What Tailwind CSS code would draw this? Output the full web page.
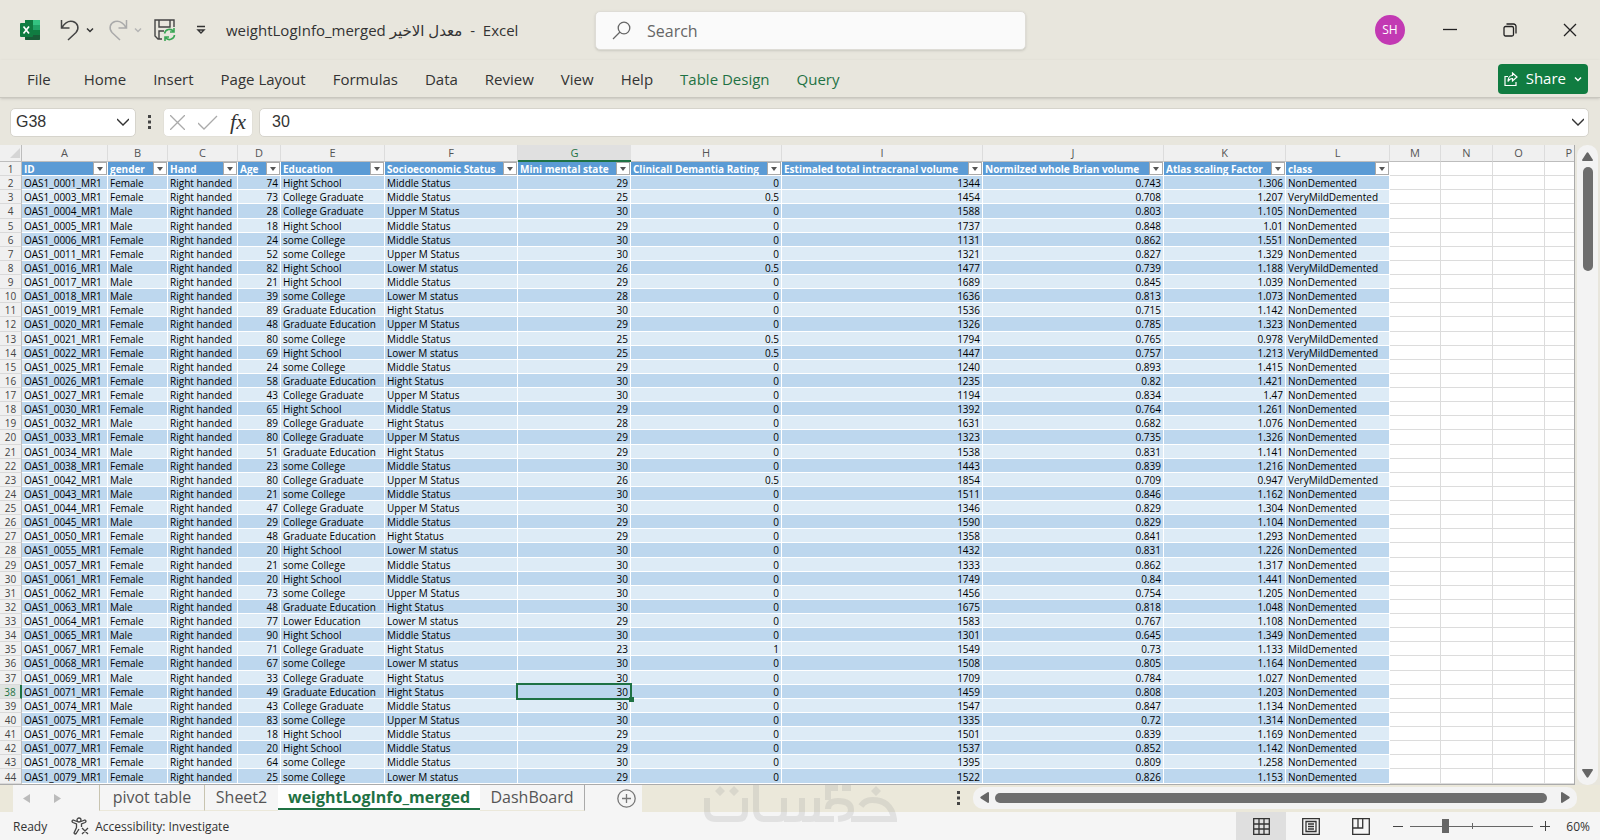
<!DOCTYPE html>
<html lang="en">
<head>
  <meta charset="UTF-8" />
  <meta name="viewport" content="width=device-width, initial-scale=1.0" />
  <title>weightLogInfo_merged - Excel</title>
  <script src="https://cdn.jsdelivr.net/npm/@tailwindcss/browser@4"></script>
</head>
<body class="h-screen flex flex-col overflow-hidden bg-[#e8e6dd] text-[#333] font-['Open_Sans','DejaVu_Sans',sans-serif]">

  <!-- TITLE BAR -->
  <header class="relative flex items-center h-[60px] shrink-0 pl-5 pr-[23px]">
    <svg class="w-5 h-5" viewBox="0 0 20 20">
      <rect x="5" y="0" width="15" height="20" rx="1" fill="#21a366" />
      <path d="M5 0h8v5H5z" fill="#107c41" />
      <path d="M13 0h6a1 1 0 0 1 1 1v4h-7z" fill="#33c481" />
      <path d="M5 10h8v5H5z" fill="#185c37" />
      <path d="M13 10h7v5h-7z" fill="#107c41" />
      <path d="M5 15h15v4a1 1 0 0 1-1 1H6a1 1 0 0 1-1-1z" fill="#185c37" />
      <rect x="0" y="3" width="13" height="14" rx="1" fill="#107c41" />
      <path d="M3.500 6.500l5.500 7M9 6.500l-5.500 7" stroke="#fff" stroke-width="1.700" />
    </svg>
    <button aria-label="Undo" class="ml-5">
      <svg class="w-5 h-[22px]" viewBox="0 0 20 22" fill="none" stroke="#444" stroke-width="1.500"><path d="M1.500 1v8h8M2 8.500C5 3.500 9 1.500 13 2.500c5 1.500 6.500 7 3 11L8 21" /></svg>
    </button>
    <button aria-label="Undo list" class="ml-1.5">
      <svg class="w-2 h-2" viewBox="0 0 8 8" fill="none" stroke="#333" stroke-width="1.500"><path d="M1 2.500l3 3 3-3" /></svg>
    </button>
    <button aria-label="Redo" class="ml-3.5">
      <svg class="w-5 h-[22px]" viewBox="0 0 20 22" fill="none" stroke="#aaa" stroke-width="1.500"><path d="M18.500 1v8h-8M18 8.500C15 3.500 11 1.500 7 2.500c-5 1.500-6.500 7-3 11L12 21" /></svg>
    </button>
    <button aria-label="Redo list" class="ml-1.5">
      <svg class="w-2 h-2" viewBox="0 0 8 8" fill="none" stroke="#b5b5b5" stroke-width="1.500"><path d="M1 2.500l3 3 3-3" /></svg>
    </button>
    <button aria-label="Save" class="ml-3">
      <svg class="w-[22px] h-[22px]" viewBox="0 0 22 22" fill="none" stroke="#444" stroke-width="1.400">
        <path d="M8 20H4l-3-3V1h19v7M5 1v7h11V1M5 20v-8h5" />
        <path d="M10.500 14.500a5 5 0 0 1 9-2M20 9v4h-4M20.500 16a5 5 0 0 1-9 2.500M11 22v-4h4" stroke="#3aa655" stroke-width="1.600" />
      </svg>
    </button>
    <button aria-label="Customize toolbar" class="ml-5">
      <svg class="w-2.5 h-2.5" viewBox="0 0 10 10" fill="none" stroke="#333" stroke-width="1.400"><path d="M1 1.500h8M2 5l3 3 3-3z" /></svg>
    </button>
    <h1 class="ml-5 text-[15px] leading-5 whitespace-pre">weightLogInfo_merged معدل الاخير  -  Excel</h1>

    <label class="absolute left-[595px] top-[11px] w-[431px] h-[39px] flex items-center gap-4 pl-4 rounded-[5px] bg-[#fafafa] border border-[#dedcd6] shadow">
      <svg class="w-[19px] h-[19px]" viewBox="0 0 19 19" fill="none" stroke="#666" stroke-width="1.300"><circle cx="12" cy="7" r="5.800" /><path d="M8 11L1 18" /></svg>
      <input type="text" aria-label="Search" placeholder="Search" class="flex-1 text-base outline-none placeholder:text-[#666]" />
    </label>

    <div class="ml-auto flex items-center">
      <button class="w-[30px] h-[30px] rounded-full bg-[#c239b3] text-white text-xs">SH</button>
      <button aria-label="Minimize" class="ml-[38px]"><svg class="w-3.5 h-3.5" viewBox="0 0 14 14" stroke="#222" stroke-width="1.300"><path d="M0 6.500h14" /></svg></button>
      <button aria-label="Restore" class="ml-[46px]"><svg class="w-3.5 h-3.5" viewBox="0 0 14 14" fill="none" stroke="#222" stroke-width="1.300"><rect x="1" y="3.500" width="9.500" height="9.500" rx="1.500" /><path d="M3.500 1h7A2.500 2.500 0 0 1 13 3.500v7" /></svg></button>
      <button aria-label="Close" class="ml-[46px]"><svg class="w-3.5 h-3.5" viewBox="0 0 14 14" stroke="#222" stroke-width="1.300"><path d="M1 1l12 12M13 1L1 13" /></svg></button>
    </div>
  </header>

  <!-- RIBBON TABS -->
  <nav class="flex items-center h-[38px] shrink-0 pl-[27px] pr-3 pt-0.5 gap-[27px] text-[15px] whitespace-nowrap border-b border-[#c9c7bf] shadow-sm">
    <button class="mr-1.5">File</button>
    <button>Home</button>
    <button>Insert</button>
    <button>Page Layout</button>
    <button>Formulas</button>
    <button>Data</button>
    <button>Review</button>
    <button>View</button>
    <button>Help</button>
    <button class="text-[#1f7244]">Table Design</button>
    <button class="text-[#1f7244]">Query</button>
    <button class="ml-auto flex items-center h-[30px] px-1.5 mb-0.5 gap-2 rounded bg-[#107c41] text-white">
      <svg class="w-3.5 h-3.5" viewBox="0 0 14 14" fill="none" stroke="#fff" stroke-width="1.200"><path d="M4 4.500H1v9h11V10M8.500 1l4.500 4-4.500 4V6.500C6 6.500 5 7.500 4 9.500c0-3 1.500-6 4.500-6z" /></svg>
      Share
      <svg class="w-2 h-2" viewBox="0 0 8 8" fill="none" stroke="#fff" stroke-width="1.500"><path d="M1 2.500l3 3 3-3" /></svg>
    </button>
  </nav>

  <!-- FORMULA BAR -->
  <div class="flex items-center h-[47px] shrink-0 pl-2.5 pr-[11px] pt-px text-base text-[#333] font-['Liberation_Sans',sans-serif]">
    <div class="flex items-center w-[126px] h-[29px] rounded-[5px] bg-white border border-[#d6d4cc] pl-[5px] pr-1.5">
      <input type="text" aria-label="Name box" value="G38" class="w-full min-w-0 outline-none" />
      <button aria-label="Names"><svg class="w-3 h-3" viewBox="0 0 12 12" fill="none" stroke="#333" stroke-width="1.400"><path d="M0 3l6 6 6-6" /></svg></button>
    </div>
    <svg class="w-[3px] h-3.5 mx-3" viewBox="0 0 3 14" fill="#444"><path d="M0 0h3v3H0zM0 5.500h3v3H0zM0 11h3v3H0z" /></svg>
    <div class="flex items-center justify-between w-[90px] h-[29px] rounded-[5px] bg-white border border-[#e2e0d8] pl-1.5 pr-1.5">
      <button aria-label="Cancel"><svg class="w-[15px] h-[15px]" viewBox="0 0 15 15" stroke="#aaa" stroke-width="1.300"><path d="M0 0l15 15M15 0L0 15" /></svg></button>
      <button aria-label="Enter"><svg class="w-5 h-[15px]" viewBox="0 0 20 15" fill="none" stroke="#aaa" stroke-width="1.300"><path d="M0 8l6 6L19 1" /></svg></button>
      <button aria-label="Insert function" class="text-[22px] leading-6 italic font-['Liberation_Serif',serif]">fx</button>
    </div>
    <div class="flex items-center flex-1 h-[29px] ml-1.5 rounded-[5px] bg-white border border-[#d6d4cc] pl-3 pr-1">
      <input type="text" aria-label="Formula" value="30" class="flex-1 outline-none" />
      <button aria-label="Expand formula bar"><svg class="w-3 h-3" viewBox="0 0 12 12" fill="none" stroke="#333" stroke-width="1.400"><path d="M0 3l6 6 6-6" /></svg></button>
    </div>
  </div>

  <!-- SHEET -->
  <main class="flex flex-1 min-h-0">
    <div class="flex-1 h-full overflow-hidden bg-white border-r border-b border-[#ababab]">
      <table class="table-fixed w-full h-full border-separate border-spacing-0 text-[10px] leading-[12px] text-black">
        <colgroup>
          <col class="w-[22px]" />
          <col class="w-[86px]" />
          <col class="w-[60px]" />
          <col class="w-[70px]" />
          <col class="w-[43px]" />
          <col class="w-[104px]" />
          <col class="w-[133px]" />
          <col class="w-[113px]" />
          <col class="w-[151px]" />
          <col class="w-[201px]" />
          <col class="w-[181px]" />
          <col class="w-[122px]" />
          <col class="w-[104px]" />
          <col class="w-[51px]" />
          <col class="w-[52px]" />
          <col class="w-[52px]" />
          <col />
        </colgroup>
        <thead>
          <tr id="letters" class="h-[17px] text-[11px] text-[#555]"></tr>
        </thead>
        <tbody id="cells"></tbody>
      </table>
    </div>
    <!-- vertical scroll bar -->
    <div class="flex flex-col items-center w-[21px] mx-0.5 py-[7px] rounded-[10px] bg-[#f3f3f3]">
      <svg class="w-[11px] h-[9px]" viewBox="0 0 11 9" fill="#666"><path d="M4.500 1q1-1.500 2 0L11 8q0 1-1 1H1Q0 9 0 8z" /></svg>
      <div class="w-2.5 h-[104px] mt-1.5 rounded-full bg-[#6e6e6e]"></div>
      <svg class="w-[11px] h-[9px] mt-auto" viewBox="0 0 11 9" fill="#666"><path d="M4.500 8q1 1.500 2 0L11 1q0-1-1-1H1Q0 0 0 1z" /></svg>
    </div>
  </main>

  <!-- SHEET TABS -->
  <div class="relative flex h-[27px] shrink-0 bg-[#ebe8da] pl-[13px] text-base text-[#555]">
    <div class="flex w-[629px] bg-[#f5f5f5]">
      <div class="flex items-center gap-6 w-[86px] pl-2.5">
        <svg class="w-[7px] h-[9px]" viewBox="0 0 7 9" fill="#bbb"><path d="M7 0v9L0 4.500z" /></svg>
        <svg class="w-[7px] h-[9px]" viewBox="0 0 7 9" fill="#bbb"><path d="M0 0v9l7-4.500z" /></svg>
      </div>
      <button class="w-[106px] h-[26px] pb-0.5 border-x border-b border-[#c8c4b0] border-b-[#ebe8da]">pivot table</button>
      <button class="w-[73px] h-[26px] pb-0.5 border-b border-[#ebe8da]">Sheet2</button>
      <button class="w-[202px] h-[25px] bg-white border-b-2 border-[#1f7244] text-[#1f7244] font-bold">weightLogInfo_merged</button>
      <button class="w-[105px] h-[26px] pb-0.5 border-r border-b border-r-[#aaa] border-b-[#ebe8da]">DashBoard</button>
      <button aria-label="New sheet" class="ml-8">
        <svg class="w-[19px] h-[19px]" viewBox="0 0 19 19" fill="none" stroke="#777" stroke-width="1.300"><circle cx="9.500" cy="9.500" r="8.700" /><path d="M9.500 5v9M5 9.500h9" /></svg>
      </button>
    </div>
    <div class="flex items-center ml-auto mr-[23px] mb-0.5">
      <svg class="w-[3px] h-3.5 mr-[13px]" viewBox="0 0 3 14" fill="#444"><path d="M0 0h3v3H0zM0 5.500h3v3H0zM0 11h3v3H0z" /></svg>
      <div class="flex items-center w-[604px] h-[22px] rounded-[10px] bg-[#f3f3f3] px-[7px]">
        <svg class="w-[9px] h-[11px]" viewBox="0 0 9 11" fill="#666"><path d="M1 4.500q-1.500 1 0 2L8 11q1 0 1-1V1q0-1-1-1z" /></svg>
        <div class="flex-1 h-2.5 ml-1.5 mr-3.5 rounded-full bg-[#6e6e6e]"></div>
        <svg class="w-[9px] h-[11px]" viewBox="0 0 9 11" fill="#666"><path d="M8 4.500q1.500 1 0 2L1 11q-1 0-1-1V1q0-1 1-1z" /></svg>
      </div>
    </div>

    <!-- logo mark over the two bottom bars -->
    <svg class="absolute left-[703px] top-0 w-[194px] h-[38px] z-10" viewBox="0 0 194 38" fill="none" stroke="#999" stroke-opacity="0.220" stroke-width="6">
      <path d="M4 13v12q0 9 9 9h22q7 0 7-7V13M53 0v24q0 10 9 10h13q6 0 6-7V13M81 34h12q6 0 6-7V13M99 34h9q6 0 6-7V13M112 34h19" />
      <path d="M148 3h-9M135 3h-10v12M125 24q0-8 10-8 13 0 13 9 0 8-13 9M148 34h43q-3-19-22-19-7 0-11 6" />
      <path d="M12 6l5-5 5 5-5 5zM26 6l5-5 5 5-5 5zM168 6l5-5 5 5-5 5z" fill="#999" fill-opacity="0.220" stroke="none" />
    </svg>
  </div>

  <!-- STATUS BAR -->
  <footer class="flex items-center h-7 shrink-0 bg-[#f5f5f5] pl-[13px] pr-2.5 text-xs text-[#333]">
    <span class="pt-0.5">Ready</span>
    <button class="flex items-center gap-1.5 ml-6">
      <svg class="w-[18px] h-[18px]" viewBox="0 0 18 18" fill="none" stroke="#444" stroke-width="1.300">
        <circle cx="8" cy="3" r="2" />
        <path d="M6 4.500L2 3Q0 4 2 5.500L5.500 7v3.500L3 16q1 2 2.500 0L8 12M10 4.500L14 3q2 1 0 2.500L10.500 7v3M11 11l6 6M17 11l-6 6" />
      </svg>
      <span class="pt-0.5">Accessibility: Investigate</span>
    </button>
    <div class="flex items-center ml-auto h-full">
      <button aria-label="Normal view" class="flex items-center justify-center w-[50px] h-full bg-[#dfdfdf]">
        <svg class="w-[17px] h-[17px]" viewBox="0 0 17 17" fill="none" stroke="#333" stroke-width="1.300"><path d="M.7.7h15.600v15.600H.7zM.7 6h15.600M.7 11h15.600M6 .7v15.600M11 .7v15.600" /></svg>
      </button>
      <button aria-label="Page layout view" class="flex items-center justify-center w-[50px] h-full">
        <svg class="w-[18px] h-[17px]" viewBox="0 0 18 17" fill="none" stroke="#333" stroke-width="1.300"><path d="M.7.7h16.600v15.600H.7zM4 3.500h10v10H4zM6 6h6M6 8.500h6M6 11h6" /></svg>
      </button>
      <button aria-label="Page break view" class="flex items-center justify-center w-[50px] h-full">
        <svg class="w-[18px] h-[17px]" viewBox="0 0 18 17" fill="none" stroke="#333" stroke-width="1.300"><path d="M.7.7h16.600v15.600H.7zM.7 10h10V.7M6 .7V10" /></svg>
      </button>
      <button aria-label="Zoom out" class="ml-[7px]"><svg class="w-2.5 h-2.5" viewBox="0 0 10 10" stroke="#444"><path d="M0 5.500h10" /></svg></button>
      <label class="relative flex items-center w-[123px] h-4 mx-[7px]">
        <span class="absolute left-0 right-0 h-px bg-[#666]"></span>
        <span class="absolute left-1/2 w-px h-1.5 bg-[#666]"></span>
        <input type="range" aria-label="Zoom" min="0" max="100" value="27" class="relative w-full h-4 appearance-none bg-transparent [&::-webkit-slider-thumb]:appearance-none [&::-webkit-slider-thumb]:w-[7px] [&::-webkit-slider-thumb]:h-3.5 [&::-webkit-slider-thumb]:bg-[#666]" />
      </label>
      <button aria-label="Zoom in"><svg class="w-2.5 h-2.5" viewBox="0 0 10 10" stroke="#444"><path d="M0 5.500h10M5.500 0v10" /></svg></button>
      <button class="ml-4 pt-0.5">60%</button>
    </div>
  </footer>

  <script>
    const letters = 'ABCDEFGHIJKLMNOP'.split('');
    const headers = ['ID', 'gender', 'Hand', 'Age', 'Education', 'Socioeconomic Status', 'Mini mental state', 'Clinicall Demantia Rating', 'Estimaled total intracranal volume', 'Normilzed whole Brian volume', 'Atlas scaling Factor', 'class'];

    // id | gender | age | education | status | mini mental | rating | total volume | brain volume | scaling | class
    const data = `0001|Female|74|Hight School|Middle Status|29|0|1344|0.743|1.306|NonDemented
0003|Female|73|College Graduate|Middle Status|25|0.5|1454|0.708|1.207|VeryMildDemented
0004|Male|28|College Graduate|Upper M Status|30|0|1588|0.803|1.105|NonDemented
0005|Male|18|Hight School|Middle Status|29|0|1737|0.848|1.01|NonDemented
0006|Female|24|some College|Middle Status|30|0|1131|0.862|1.551|NonDemented
0011|Female|52|some College|Upper M Status|30|0|1321|0.827|1.329|NonDemented
0016|Male|82|Hight School|Lower M status|26|0.5|1477|0.739|1.188|VeryMildDemented
0017|Male|21|Hight School|Middle Status|29|0|1689|0.845|1.039|NonDemented
0018|Male|39|some College|Lower M status|28|0|1636|0.813|1.073|NonDemented
0019|Female|89|Graduate Education|Hight Status|30|0|1536|0.715|1.142|NonDemented
0020|Female|48|Graduate Education|Upper M Status|29|0|1326|0.785|1.323|NonDemented
0021|Female|80|some College|Middle Status|25|0.5|1794|0.765|0.978|VeryMildDemented
0022|Female|69|Hight School|Lower M status|25|0.5|1447|0.757|1.213|VeryMildDemented
0025|Female|24|some College|Middle Status|29|0|1240|0.893|1.415|NonDemented
0026|Female|58|Graduate Education|Hight Status|30|0|1235|0.82|1.421|NonDemented
0027|Female|43|College Graduate|Upper M Status|30|0|1194|0.834|1.47|NonDemented
0030|Female|65|Hight School|Middle Status|29|0|1392|0.764|1.261|NonDemented
0032|Male|89|College Graduate|Hight Status|28|0|1631|0.682|1.076|NonDemented
0033|Female|80|College Graduate|Upper M Status|29|0|1323|0.735|1.326|NonDemented
0034|Male|51|Graduate Education|Hight Status|29|0|1538|0.831|1.141|NonDemented
0038|Female|23|some College|Middle Status|30|0|1443|0.839|1.216|NonDemented
0042|Male|80|College Graduate|Upper M Status|26|0.5|1854|0.709|0.947|VeryMildDemented
0043|Male|21|some College|Middle Status|30|0|1511|0.846|1.162|NonDemented
0044|Female|47|College Graduate|Upper M Status|30|0|1346|0.829|1.304|NonDemented
0045|Male|29|College Graduate|Middle Status|29|0|1590|0.829|1.104|NonDemented
0050|Female|48|Graduate Education|Hight Status|29|0|1358|0.841|1.293|NonDemented
0055|Female|20|Hight School|Lower M status|30|0|1432|0.831|1.226|NonDemented
0057|Female|21|some College|Middle Status|30|0|1333|0.862|1.317|NonDemented
0061|Female|20|Hight School|Middle Status|30|0|1749|0.84|1.441|NonDemented
0062|Female|73|some College|Upper M Status|30|0|1456|0.754|1.205|NonDemented
0063|Male|48|Graduate Education|Hight Status|30|0|1675|0.818|1.048|NonDemented
0064|Female|77|Lower Education|Lower M status|29|0|1583|0.767|1.108|NonDemented
0065|Male|90|Hight School|Middle Status|30|0|1301|0.645|1.349|NonDemented
0067|Female|71|College Graduate|Hight Status|23|1|1549|0.73|1.133|MildDemented
0068|Female|67|some College|Lower M status|30|0|1508|0.805|1.164|NonDemented
0069|Male|33|College Graduate|Hight Status|30|0|1709|0.784|1.027|NonDemented
0071|Female|49|Graduate Education|Hight Status|30|0|1459|0.808|1.203|NonDemented
0074|Male|43|College Graduate|Middle Status|30|0|1547|0.847|1.134|NonDemented
0075|Female|83|some College|Upper M Status|30|0|1335|0.72|1.314|NonDemented
0076|Female|18|Hight School|Middle Status|29|0|1501|0.839|1.169|NonDemented
0077|Female|20|Hight School|Middle Status|29|0|1537|0.852|1.142|NonDemented
0078|Female|64|some College|Middle Status|30|0|1395|0.809|1.258|NonDemented
0079|Female|25|some College|Lower M status|29|0|1522|0.826|1.153|NonDemented`;

    const emptyCells = '<td class="border-r border-b border-[#dcdcdc]"></td>'.repeat(3) + '<td class="border-b border-[#dcdcdc]"></td>';

    // row numbers; 38 is the selected row
    function rowHead(n) {
      const tone = n === 38
        ? 'bg-[#dfe3e0] text-[#1f7244] border-r-2 border-r-[#1f7244]'
        : 'bg-[#f0f0f0] text-[#444] border-r border-r-[#bdbdbd]';
      return `<th scope="row" class="p-0 pt-px text-center font-normal border-b border-b-[#d9d9d9] ${tone}">${n}</th>`;
    }

    // column letters
    document.getElementById('letters').innerHTML =
      '<td class="p-0 bg-[#f0f0f0] border-r border-b border-[#bdbdbd]"><svg class="w-2.5 h-2.5 ml-2.5" viewBox="0 0 10 10" fill="#d5d5d5"><path d="M10 0v10H0z"/></svg></td>' +
      letters.map(l => {
        if (l === 'G') return '<th scope="col" class="p-0 font-normal bg-[#e0e0e0] text-[#1f7244] border-b-2 border-[#1f7244]">G</th>';
        if (l === 'P') return '<th scope="col" class="p-0 pr-0.5 font-normal text-right bg-[#f0f0f0] border-b border-[#bdbdbd]">P</th>';
        return `<th scope="col" class="p-0 font-normal bg-[#f0f0f0] border-r border-b border-r-[#dcdcdc] border-b-[#bdbdbd]">${l}</th>`;
      }).join('');

    // table header row
    let html = '<tr>' + rowHead(1) + headers.map(h => `
      <th scope="col" class="p-0 bg-[#5b9bd5] text-white text-left border-r border-b border-white">
        <div class="flex items-center justify-between h-[13px] pl-0.5 whitespace-nowrap overflow-hidden">
          <span>${h}</span>
          <button aria-label="Filter ${h}" class="flex items-center justify-center w-3.5 h-[13px] shrink-0 bg-white border border-[#aaa]">
            <svg class="w-1.5 h-1" viewBox="0 0 6 4" fill="#555"><path d="M0 0h6L3 4z"/></svg>
          </button>
        </div>
      </th>`).join('') + emptyCells + '</tr>';

    data.split('\n').forEach((line, i) => {
      const [id, gender, ...rest] = line.split('|');
      const values = [`OAS1_${id}_MR1`, gender, 'Right handed', ...rest];
      const band = i % 2 === 0 ? 'bg-[#bdd7ee]' : 'bg-[#ddebf6]';
      html += `<tr>${rowHead(i + 2)}` + values.map((v, c) => {
        const align = isNaN(v) ? 'text-left' : 'text-right';
        // active cell
        if (i + 2 === 38 && c === 6) {
          return `<td class="relative p-0 px-0.5 pt-px ${band} ${align} border-r border-b border-white">${v}
            <span class="absolute -inset-0.5 border-2 border-[#1f7244]"></span>
            <span class="absolute -right-1 -bottom-1 w-[5px] h-[5px] bg-[#1f7244]"></span></td>`;
        }
        return `<td class="p-0 px-0.5 pt-px whitespace-nowrap ${band} ${align} border-r border-b border-white">${v}</td>`;
      }).join('') + emptyCells + '</tr>';
    });
    document.getElementById('cells').innerHTML = html;
  </script>
</body>
</html>
